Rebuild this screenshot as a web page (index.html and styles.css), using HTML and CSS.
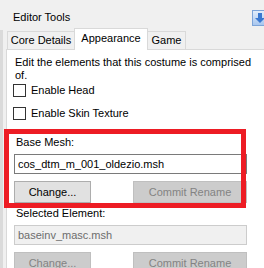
FILE: index.html
```html
<!DOCTYPE html>
<html lang="en">
<head>
  <meta charset="UTF-8" />
  <title>Editor Tools</title>
  <link rel="stylesheet" href="styles.css">
</head>
<body>
  <div class="titlebar">
    <span class="title">Editor Tools</span>
    <svg class="pin" width="16" height="16" viewBox="0 0 16 16">
      <defs>
        <linearGradient id="pinbg" x1="0" y1="0" x2="0" y2="1">
          <stop offset="0" stop-color="#e3eefb" />
          <stop offset="1" stop-color="#a6c5ee" />
        </linearGradient>
      </defs>
      <rect x="0.5" y="0.5" width="15" height="15" fill="url(#pinbg)" stroke="#7da4d8" />
      <polygon points="6,3 10,3 10,8 13,8 8,13 3,8 6,8" fill="#3a78d0" />
    </svg>
  </div>

  <div class="workspace">
    <div class="rail"></div>
    <div class="tabctl">
      <div class="tabs">
        <div class="tab core">Core Details</div>
        <div class="tab active">Appearance</div>
        <div class="tab game">Game</div>
      </div>

      <div class="page">
        <p class="intro">Edit the elements that this costume is comprised of.</p>

        <label class="check"><span class="box"></span>Enable Head</label>
        <label class="check"><span class="box"></span>Enable Skin Texture</label>

        <div class="group marked">
          <div class="caption">Base Mesh:</div>
          <div class="field">cos_dtm_m_001_oldezio.msh</div>
          <div class="actions">
            <button class="btn change">Change...</button>
            <button class="btn commit" disabled>Commit Rename</button>
          </div>
        </div>

        <div class="group second">
          <div class="caption">Selected Element:</div>
          <div class="field off">baseinv_masc.msh</div>
          <div class="actions">
            <button class="btn change" disabled>Change...</button>
            <button class="btn commit" disabled>Commit Rename</button>
          </div>
        </div>
      </div>
    </div>
  </div>
</body>
</html>
```

FILE: styles.css
```css
html, body {
  overflow: hidden;
}
body {
  margin: 0;
  background-color: #f0f0f0;
  color: #000;
  font-family: 'Liberation Sans', Arial, sans-serif;
  font-size: 11px;
  line-height: 13px;
}
.titlebar {
  height: 28px;
  display: flex;
  justify-content: space-between;
  align-items: flex-start;
  padding: 10px 0 0 13px;
  box-sizing: border-box;
}
.title {
  line-height: 15px;
}
.pin {
  margin-right: -4px;
}
.workspace {
  display: flex;
  height: 240px;
}
.rail {
  width: 3px;
  margin-top: 2px;
  background-color: #dadada;
}
.tabctl {
  flex: 1;
  margin-left: 3px;
  display: flex;
  flex-direction: column;
}
.tabs {
  height: 21px;
  display: flex;
  align-items: flex-end;
  padding-left: 1px;
}
.tab {
  height: 18px;
  box-sizing: border-box;
  padding-top: 2px;
  text-align: center;
  white-space: nowrap;
  border: 1px solid #d9d9d9;
  border-bottom: none;
  background-color: #f0f0f0;
}
.tab.core {
  width: 68px;
}
.tab.game {
  width: 39px;
}
.tab.active {
  position: relative;
  width: 74px;
  height: 22px;
  margin: 0 -1px -1px -1px;
  padding-top: 3px;
  background-color: #fff;
  z-index: 1;
}
.page {
  flex: 1;
  background-color: #fff;
  border-top: 1px solid #d9d9d9;
  border-left: 1px solid #d9d9d9;
  padding: 6px 0 0 7px;
}
.intro {
  margin: 0;
  width: 244px;
  padding-left: 1px;
}
.check {
  display: flex;
  align-items: flex-start;
  height: 23px;
  padding-top: 2px;
  box-sizing: border-box;
}
.box {
  width: 13px;
  height: 13px;
  box-sizing: border-box;
  border: 1px solid #333;
  background-color: #fff;
  margin: 0 5px 0 -1px;
}
.group {
  position: relative;
  width: 233px;
  margin-top: 8px;
}
.group.second {
  margin-top: 4px;
}
.group.marked::after {
  content: "";
  position: absolute;
  top: -7px;
  left: -10px;
  right: 1px;
  bottom: -5px;
  border: 5px solid #ed1c24;
  pointer-events: none;
}
.caption {
  padding-left: 2px;
}
.field {
  height: 20px;
  box-sizing: border-box;
  margin-top: 5px;
  padding: 3px 0 0 3px;
  border: 1px solid #7a7a7a;
  background-color: #fff;
}
.field.off {
  border-color: #cccccc;
  background-color: #f0f0f0;
  color: #6d6d6d;
}
.actions {
  display: flex;
  justify-content: space-between;
  margin-top: 7px;
}
.btn {
  height: 22px;
  box-sizing: border-box;
  font-family: 'Liberation Sans', Arial, sans-serif;
  font-size: 11px;
  line-height: 13px;
  white-space: nowrap;
  text-align: center;
  color: #000;
  background-color: #e1e1e1;
  border: 1px solid #adadad;
  padding: 0;
}
.btn:disabled {
  background-color: #cccccc;
  border-color: #bfbfbf;
  color: #838383;
}
.change {
  width: 77px;
}
.commit {
  width: 114px;
}
```
